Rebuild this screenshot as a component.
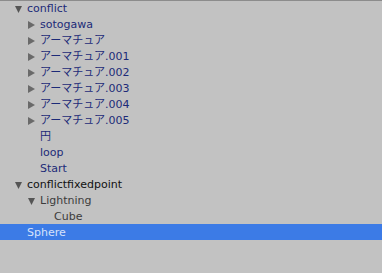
import React from "react";

const rows = [
  { label: "conflict", depth: 0, arrow: "down", tone: "blue" },
  { label: "sotogawa", depth: 1, arrow: "right", tone: "blue" },
  { label: "アーマチュア", depth: 1, arrow: "right", tone: "blue" },
  { label: "アーマチュア.001", depth: 1, arrow: "right", tone: "blue" },
  { label: "アーマチュア.002", depth: 1, arrow: "right", tone: "blue" },
  { label: "アーマチュア.003", depth: 1, arrow: "right", tone: "blue" },
  { label: "アーマチュア.004", depth: 1, arrow: "right", tone: "blue" },
  { label: "アーマチュア.005", depth: 1, arrow: "right", tone: "blue" },
  { label: "円", depth: 1, tone: "blue" },
  { label: "loop", depth: 1, tone: "blue" },
  { label: "Start", depth: 1, tone: "blue" },
  { label: "conflictfixedpoint", depth: 0, arrow: "down", tone: "black" },
  { label: "Lightning", depth: 1, arrow: "down", tone: "gray" },
  { label: "Cube", depth: 2, tone: "gray" },
  { label: "Sphere", depth: 0, tone: "selected" },
];

const toneClass = {
  blue: "text-[#1c2a78]",
  black: "text-[#111111]",
  gray: "text-[#3c3c3c]",
  selected: "text-[#d6e2fa]",
};

const indentClass = ["pl-[27px]", "pl-[40px]", "pl-[54px]"];

const Arrow = ({ dir }) => (
  <svg
    width="7"
    height="8"
    viewBox="0 0 7 8"
    className="absolute top-[3px] -left-[12px]"
  >
    {dir === "down" ? (
      <polygon points="0,1 7,1 3.5,8" fill="#555555" />
    ) : (
      <polygon points="0,0 7,4 0,8" fill="#6a6a6a" />
    )}
  </svg>
);

const App = () => {
  return (
    <div
      className="w-[382px] h-[273px] bg-[#c2c2c2] overflow-hidden shadow-[inset_0_1px_0_#8c8c8c] text-[11px]"
      style={{ fontFamily: '"DejaVu Sans", "Noto Sans CJK JP", sans-serif' }}
    >
      {rows.map((row, i) => (
        <div
          key={i}
          className={`h-[16px] pt-[1px] leading-[15px] ${indentClass[row.depth]} ${
            row.tone === "selected" ? "bg-[#3c7be6]" : ""
          }`}
        >
          <span className={`relative whitespace-nowrap ${toneClass[row.tone]}`}>
            {row.arrow && <Arrow dir={row.arrow} />}
            {row.label}
          </span>
        </div>
      ))}
    </div>
  );
};

export default App;
